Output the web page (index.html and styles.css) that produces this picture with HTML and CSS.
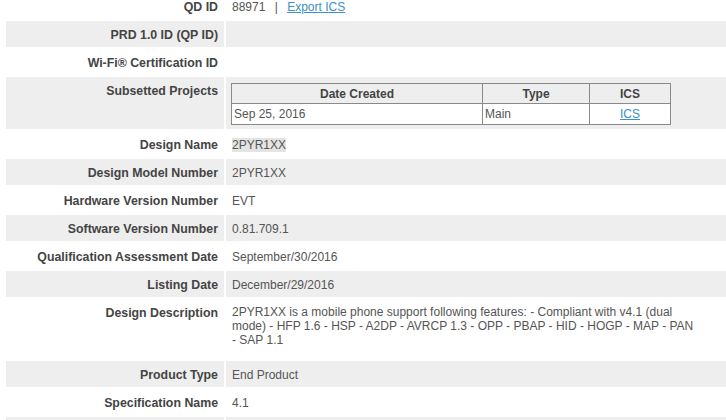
FILE: index.html
```html
<!DOCTYPE html>
<html>
<head>
<meta charset="utf-8">
<link rel="stylesheet" href="styles.css">
</head>
<body>
<table class="details">
  <tr class="odd">
    <th>QD ID</th>
    <td>88971 <span class="sep">|</span> <a href="#">Export ICS</a></td>
  </tr>
  <tr class="even">
    <th>PRD 1.0 ID (QP ID)</th>
    <td></td>
  </tr>
  <tr class="odd">
    <th>Wi-Fi® Certification ID</th>
    <td></td>
  </tr>
  <tr class="even">
    <th>Subsetted Projects</th>
    <td class="projects">
      <table class="sub">
        <tr>
          <th class="c-date">Date Created</th>
          <th class="c-type">Type</th>
          <th class="c-ics">ICS</th>
        </tr>
        <tr>
          <td>Sep 25, 2016</td>
          <td>Main</td>
          <td class="center"><a href="#">ICS</a></td>
        </tr>
      </table>
    </td>
  </tr>
  <tr class="odd">
    <th>Design Name</th>
    <td><span class="hl">2PYR1XX</span></td>
  </tr>
  <tr class="even">
    <th>Design Model Number</th>
    <td>2PYR1XX</td>
  </tr>
  <tr class="odd">
    <th>Hardware Version Number</th>
    <td>EVT</td>
  </tr>
  <tr class="even">
    <th>Software Version Number</th>
    <td>0.81.709.1</td>
  </tr>
  <tr class="odd">
    <th>Qualification Assessment Date</th>
    <td>September/30/2016</td>
  </tr>
  <tr class="even">
    <th>Listing Date</th>
    <td>December/29/2016</td>
  </tr>
  <tr class="odd">
    <th>Design Description</th>
    <td class="desc">2PYR1XX is a mobile phone support following features: - Compliant with v4.1 (dual mode) - HFP 1.6 - HSP - A2DP - AVRCP 1.3 - OPP - PBAP - HID - HOGP - MAP - PAN - SAP 1.1</td>
  </tr>
  <tr class="even">
    <th>Product Type</th>
    <td>End Product</td>
  </tr>
  <tr class="odd">
    <th>Specification Name</th>
    <td>4.1</td>
  </tr>
  <tr class="even">
    <th>&nbsp;</th>
    <td></td>
  </tr>
</table>
</body>
</html>
```
FILE: styles.css
```css
html, body {
  margin: 0;
  padding: 0;
  background: #fff;
  overflow: hidden;
}

body {
  font-family: "Liberation Sans", Arial, sans-serif;
  font-size: 12px;
  color: #555;
}

.details {
  border-collapse: separate;
  border-spacing: 2px;
  margin: -9px 0 0 4px;
  width: 740px;
}

.details > tbody > tr > th,
.details > tbody > tr > td {
  padding: 7px 6px 5px 6px;
  line-height: 14px;
  vertical-align: top;
  text-align: left;
  font-weight: normal;
}

.details > tbody > tr > th {
  width: 206px;
  text-align: right;
  font-weight: bold;
  font-size: 12.35px;
  color: #444;
}

.details tr.even > th,
.details tr.even > td {
  background: #eeeeee;
}

a {
  color: #3d8fc6;
  text-decoration: underline;
}

.sep {
  margin: 0 6px;
}

.hl {
  background: #e4e4e4;
}

.desc {
  padding-right: 46px !important;
  padding-top: 6px !important;
  padding-bottom: 12px !important;
}

.details > tbody > tr > td.projects {
  padding: 6px 6px 4px 5px;
}

.sub {
  border-collapse: collapse;
  border: 1px solid #6f6f6f;
}

.sub th,
.sub td {
  border: 1px solid #8a8a8a;
  line-height: 14px;
  font-size: 12px;
}

.sub th {
  background: #eeeeee;
  color: #444;
  font-weight: bold;
  text-align: center;
  padding: 3px 3px 2px 3px;
}

.sub td {
  background: #fff;
  padding: 3px 2px 3px 2px;
  text-align: left;
}

.sub td.center {
  text-align: center;
}

.c-date { width: 244px; }
.c-type { width: 100px; }
.c-ics { width: 74px; }
```
